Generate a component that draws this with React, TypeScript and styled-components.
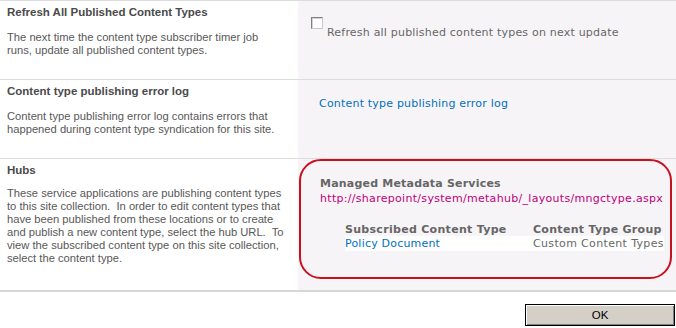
import React from "react";
import styled, { createGlobalStyle } from "styled-components";

const Global = createGlobalStyle`
  html, body { margin: 0; padding: 0; background: #ffffff; }
  body { width: 676px; height: 328px; overflow: hidden; }
`;

const Page = styled.div`
  width: 676px;
  display: flex;
  flex-direction: column;
  border-top: 1px solid #dcdcdc;
`;

const Section = styled.section<{ $height: number; $last?: boolean }>`
  display: grid;
  grid-template-columns: 298px 1fr;
  height: ${(p) => p.$height}px;
  border-bottom: ${(p) => (p.$last ? "2px solid #d6d6d6" : "1px solid #dcdcdc")};
  box-sizing: border-box;
`;

const LeftCell = styled.div<{ $gap: number }>`
  display: flex;
  flex-direction: column;
  gap: ${(p) => p.$gap}px;
  padding: 5px 0 0 7px;
  background: #ffffff;
`;

const Heading = styled.h3`
  margin: 0;
  font-family: "Liberation Sans", Arial, sans-serif;
  font-weight: bold;
  font-size: 11.5px;
  line-height: 13px;
  color: #4a4a4a;
`;

const Description = styled.p`
  margin: 0;
  font-family: "Liberation Sans", Arial, sans-serif;
  font-size: 11.2px;
  line-height: 13px;
  color: #585858;
  white-space: nowrap;
`;

const RightCell = styled.div<{ $pad: string }>`
  background: #f7f4f7;
  padding: ${(p) => p.$pad};
  font-family: "DejaVu Sans", Verdana, sans-serif;
  font-size: 11px;
  color: #676767;
`;

const CheckRow = styled.label`
  display: flex;
  align-items: flex-start;
  gap: 4px;
  line-height: 13px;
`;

const Box = styled.span`
  display: inline-block;
  width: 12px;
  height: 12px;
  box-sizing: border-box;
  background: #ffffff;
  border-top: 1px solid #808080;
  border-left: 1px solid #808080;
  border-right: 1px solid #c8c8c8;
  border-bottom: 1px solid #c8c8c8;
  box-shadow: inset 1px 1px 0 #d4d4d4;
`;

const CheckText = styled.span`
  padding-top: 9px;
  letter-spacing: 0.2px;
`;

const Link = styled.a`
  color: #0072bc;
  text-decoration: none;
  line-height: 13px;
  letter-spacing: 0.2px;
`;

const HubBox = styled.div`
  width: 373px;
  height: 120px;
  box-sizing: border-box;
  border: 2px solid #c8101e;
  border-radius: 22px;
  padding: 16px 0 0 19px;
  display: flex;
  flex-direction: column;
`;

const HubTitle = styled.div`
  font-weight: bold;
  color: #666666;
  line-height: 13px;
  letter-spacing: 0.2px;
`;

const HubUrl = styled.a`
  color: #c0007a;
  text-decoration: none;
  line-height: 13px;
  margin-top: 2px;
  letter-spacing: 0.3px;
`;

const Table = styled.div`
  margin: 18px 0 0 25px;
  display: grid;
  grid-template-columns: 188px 131px;
`;

const Th = styled.div`
  font-weight: bold;
  color: #666666;
  line-height: 13px;
  letter-spacing: 0.3px;
  white-space: nowrap;
`;

const Td = styled.div`
  background: #ffffff;
  height: 15px;
  line-height: 15px;
  color: #676767;
  letter-spacing: 0.35px;
  white-space: nowrap;
`;

const Footer = styled.div`
  display: flex;
  justify-content: flex-end;
  padding: 12px 1px 0 0;
`;

const OkButton = styled.button`
  width: 150px;
  height: 22px;
  box-sizing: border-box;
  background: #d4d0c8;
  border: 1px solid #000000;
  box-shadow: inset 1px 1px 0 #ffffff, inset -1px -1px 0 #808080;
  font-family: "Liberation Sans", Arial, sans-serif;
  font-size: 11.5px;
  color: #000000;
  padding: 0;
`;

export default function App() {
  return (
    <>
      <Global />
      <Page>
        <Section $height={79}>
          <LeftCell $gap={12}>
            <Heading>Refresh All Published Content Types</Heading>
            <Description>
              The next time the content type subscriber timer job
              <br />
              runs, update all published content types.
            </Description>
          </LeftCell>
          <RightCell $pad="16px 0 0 13px">
            <CheckRow>
              <Box />
              <CheckText>Refresh all published content types on next update</CheckText>
            </CheckRow>
          </RightCell>
        </Section>
        <Section $height={79}>
          <LeftCell $gap={12}>
            <Heading>Content type publishing error log</Heading>
            <Description>
              Content type publishing error log contains errors that
              <br />
              happened during content type syndication for this site.
            </Description>
          </LeftCell>
          <RightCell $pad="17px 0 0 21px">
            <Link href="#">Content type publishing error log</Link>
          </RightCell>
        </Section>
        <Section $height={133} $last>
          <LeftCell $gap={10}>
            <Heading>Hubs</Heading>
            <Description>
              These service applications are publishing content types
              <br />
              to this site collection.&nbsp; In order to edit content types that
              <br />
              have been published from these locations or to create
              <br />
              and publish a new content type, select the hub URL.&nbsp; To
              <br />
              view the subscribed content type on this site collection,
              <br />
              select the content type.
            </Description>
          </LeftCell>
          <RightCell $pad="0 0 0 1px">
            <HubBox>
              <HubTitle>Managed Metadata Services</HubTitle>
              <HubUrl href="#">http://sharepoint/system/metahub/_layouts/mngctype.aspx</HubUrl>
              <Table>
                <Th>Subscribed Content Type</Th>
                <Th>Content Type Group</Th>
                <Td>
                  <Link href="#">Policy Document</Link>
                </Td>
                <Td>Custom Content Types</Td>
              </Table>
            </HubBox>
          </RightCell>
        </Section>
        <Footer>
          <OkButton>OK</OkButton>
        </Footer>
      </Page>
    </>
  );
}
